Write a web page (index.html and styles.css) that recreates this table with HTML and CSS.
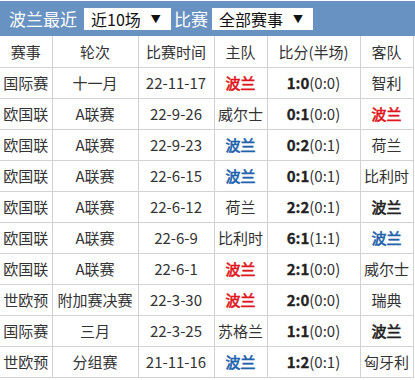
FILE: index.html
```html
<!DOCTYPE html>
<html lang="zh">
<head>
<meta charset="utf-8">
<link rel="stylesheet" href="styles.css">
</head>
<body>
<div class="bar">
  <span class="lbl first">波兰最近</span>
  <span class="sel sel1">近10场<span class="arr">▼</span></span>
  <span class="lbl">比赛</span>
  <span class="sel sel2">全部赛事<span class="arr">▼</span></span>
</div>
<table class="tbl">
  <colgroup>
    <col class="c1"><col class="c2"><col class="c3"><col class="c4"><col class="c5"><col class="c6">
  </colgroup>
  <tr><th>赛事</th><th>轮次</th><th>比赛时间</th><th>主队</th><th>比分(半场)</th><th>客队</th></tr>
  <tr><td>国际赛</td><td>十一月</td><td>22-11-17</td><td class="win">波兰</td><td><b>1:0</b>(0:0)</td><td>智利</td></tr>
  <tr><td>欧国联</td><td>A联赛</td><td>22-9-26</td><td>威尔士</td><td><b>0:1</b>(0:0)</td><td class="win">波兰</td></tr>
  <tr><td>欧国联</td><td>A联赛</td><td>22-9-23</td><td class="lose">波兰</td><td><b>0:2</b>(0:1)</td><td>荷兰</td></tr>
  <tr><td>欧国联</td><td>A联赛</td><td>22-6-15</td><td class="lose">波兰</td><td><b>0:1</b>(0:1)</td><td>比利时</td></tr>
  <tr><td>欧国联</td><td>A联赛</td><td>22-6-12</td><td>荷兰</td><td><b>2:2</b>(0:1)</td><td class="draw">波兰</td></tr>
  <tr><td>欧国联</td><td>A联赛</td><td>22-6-9</td><td>比利时</td><td><b>6:1</b>(1:1)</td><td class="lose">波兰</td></tr>
  <tr><td>欧国联</td><td>A联赛</td><td>22-6-1</td><td class="win">波兰</td><td><b>2:1</b>(0:0)</td><td>威尔士</td></tr>
  <tr><td>世欧预</td><td>附加赛决赛</td><td>22-3-30</td><td class="win">波兰</td><td><b>2:0</b>(0:0)</td><td>瑞典</td></tr>
  <tr><td>国际赛</td><td>三月</td><td>22-3-25</td><td>苏格兰</td><td><b>1:1</b>(0:0)</td><td class="draw">波兰</td></tr>
  <tr><td>世欧预</td><td>分组赛</td><td>21-11-16</td><td class="lose">波兰</td><td><b>1:2</b>(0:1)</td><td>匈牙利</td></tr>
</table>
</body>
</html>
```
FILE: styles.css
```css
html, body {
  margin: 0;
  padding: 0;
  background: #fff;
}
body {
  width: 415px;
  font-family: "Noto Sans CJK SC", "Noto Sans", sans-serif;
  color: #333;
}
.bar {
  height: 35px;
  margin-top: 1px;
  background: #6892c1;
  display: flex;
  align-items: center;
  padding-left: 9px;
  box-sizing: border-box;
}
.lbl {
  color: #fff;
  font-size: 17px;
  line-height: 22px;
}
.sel {
  background: #fff;
  color: #111;
  font-size: 16px;
  height: 22px;
  line-height: 22px;
  display: flex;
  align-items: center;
  box-sizing: border-box;
  padding-left: 7px;
  margin: 0 3px 0 7px;
}
.sel1 { width: 87px; }
.sel2 { width: 101px; margin-left: 4px; }
.arr {
  font-size: 10px;
  margin-left: 10px;
  color: #111;
}
.tbl {
  border-collapse: collapse;
  table-layout: fixed;
  width: 413px;
  font-size: 15px;
}
.c1 { width: 52px; }
.c2 { width: 86px; }
.c3 { width: 76px; }
.c4 { width: 53px; }
.c5 { width: 93px; }
.c6 { width: 53px; }
.tbl th, .tbl td {
  border: 1px solid #d2d2d2;
  height: 30px;
  padding: 0;
  text-align: center;
  font-weight: normal;
  white-space: nowrap;
  overflow: hidden;
  line-height: 20px;
}
.tbl tr:first-child th { border-top: none; height: 31px; }
.tbl tr > :first-child { border-left: none; }
.tbl b { font-weight: bold; color: #222; -webkit-text-stroke: 0.3px #222; }
.win { color: #e0161c; -webkit-text-stroke: 0.6px #e0161c; }
.lose { color: #2162ad; -webkit-text-stroke: 0.6px #2162ad; }
.draw { color: #222; -webkit-text-stroke: 0.6px #222; }
```
